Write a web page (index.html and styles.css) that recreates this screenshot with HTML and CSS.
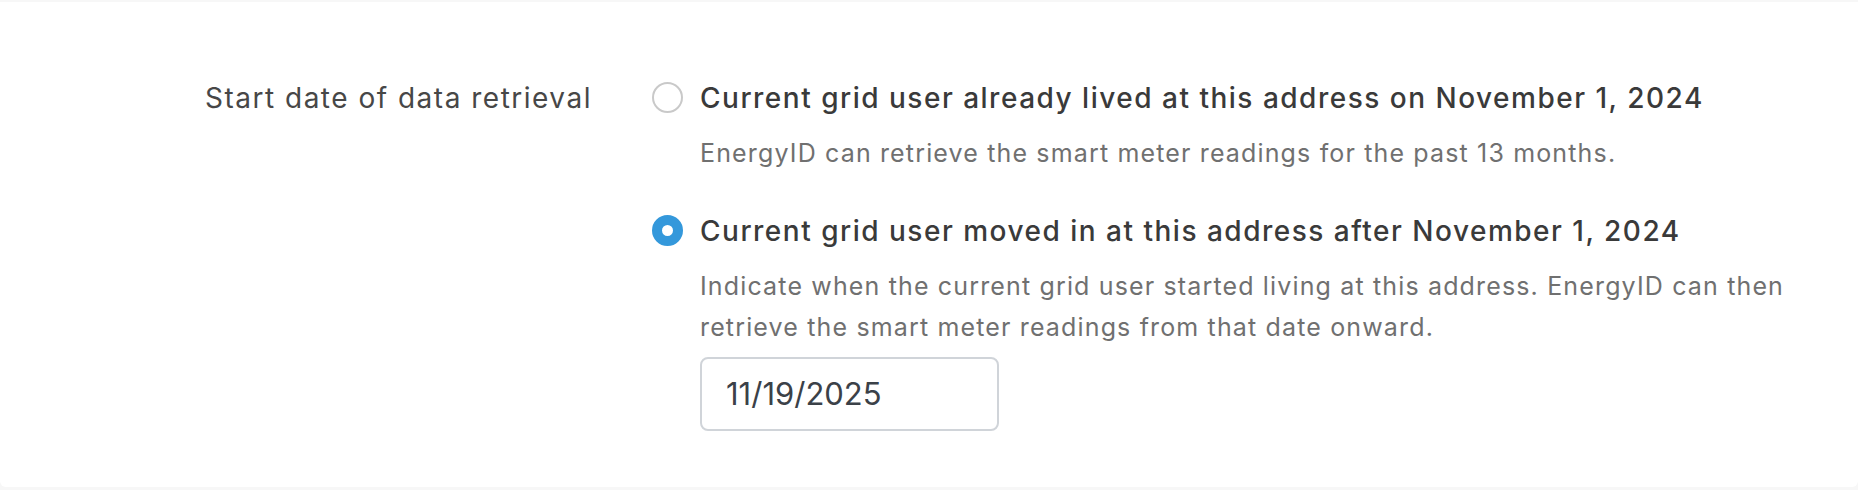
FILE: index.html
```html
<!DOCTYPE html>
<html lang="en">
<head>
<meta charset="utf-8">
<title>Start date of data retrieval</title>
<link rel="stylesheet" href="styles.css">
</head>
<body>
<div class="card">
  <div class="field">
    <div class="field-label">Start date of data retrieval</div>
    <div class="options">
      <label class="option">
        <span class="radio"></span>
        <span class="option-body">
          <span class="option-title">Current grid user already lived at this address on November 1, 2024</span>
          <span class="option-desc">EnergyID can retrieve the smart meter readings for the past 13 months.</span>
        </span>
      </label>
      <label class="option">
        <span class="radio checked"></span>
        <span class="option-body">
          <span class="option-title">Current grid user moved in at this address after November 1, 2024</span>
          <span class="option-desc">Indicate when the current grid user started living at this address. EnergyID can then retrieve the smart meter readings from that date onward.</span>
          <span class="date-input">11/19/2025</span>
        </span>
      </label>
    </div>
  </div>
</div>
</body>
</html>
```
FILE: styles.css
```css
html, body {
  margin: 0;
  padding: 0;
  background: #f7f7f7;
}
body {
  padding: 2px 0 3px;
  font-family: Inter, "Noto Sans", "Liberation Sans", sans-serif;
}
.card {
  background: #ffffff;
  border-radius: 0 0 6px 6px;
  height: 485px;
  box-sizing: border-box;
  padding: 76px 0 0 205px;
}
.field {
  display: grid;
  grid-template-columns: 447px 1fr;
}
.field-label {
  font-size: 28px;
  line-height: 40px;
  letter-spacing: 1.5px;
  color: #474747;
}
.options {
  display: flex;
  flex-direction: column;
  gap: 36px;
}
.option {
  display: flex;
  align-items: flex-start;
  gap: 17px;
}
.radio {
  flex: none;
  width: 31px;
  height: 31px;
  margin-top: 4px;
  box-sizing: border-box;
  border-radius: 50%;
  border: 2px solid #c9c9c9;
  background: #ffffff;
}
.radio.checked {
  border: 10px solid #3498db;
  background: #ffffff;
}
.option-body {
  display: flex;
  flex-direction: column;
  align-items: flex-start;
}
.option-title {
  font-size: 28px;
  line-height: 40px;
  font-weight: 500;
  letter-spacing: 1.5px;
  color: #3a3a3a;
}
.option-desc {
  margin-top: 15px;
  font-size: 25px;
  line-height: 41.5px;
  letter-spacing: 1.15px;
  color: #707070;
  max-width: 1100px;
}
.date-input {
  margin-top: 8px;
  width: 299px;
  height: 74px;
  box-sizing: border-box;
  border: 2px solid #d0d4d9;
  border-radius: 8px;
  padding-left: 24px;
  display: flex;
  align-items: center;
  font-size: 31px;
  color: #3b4148;
}
```
